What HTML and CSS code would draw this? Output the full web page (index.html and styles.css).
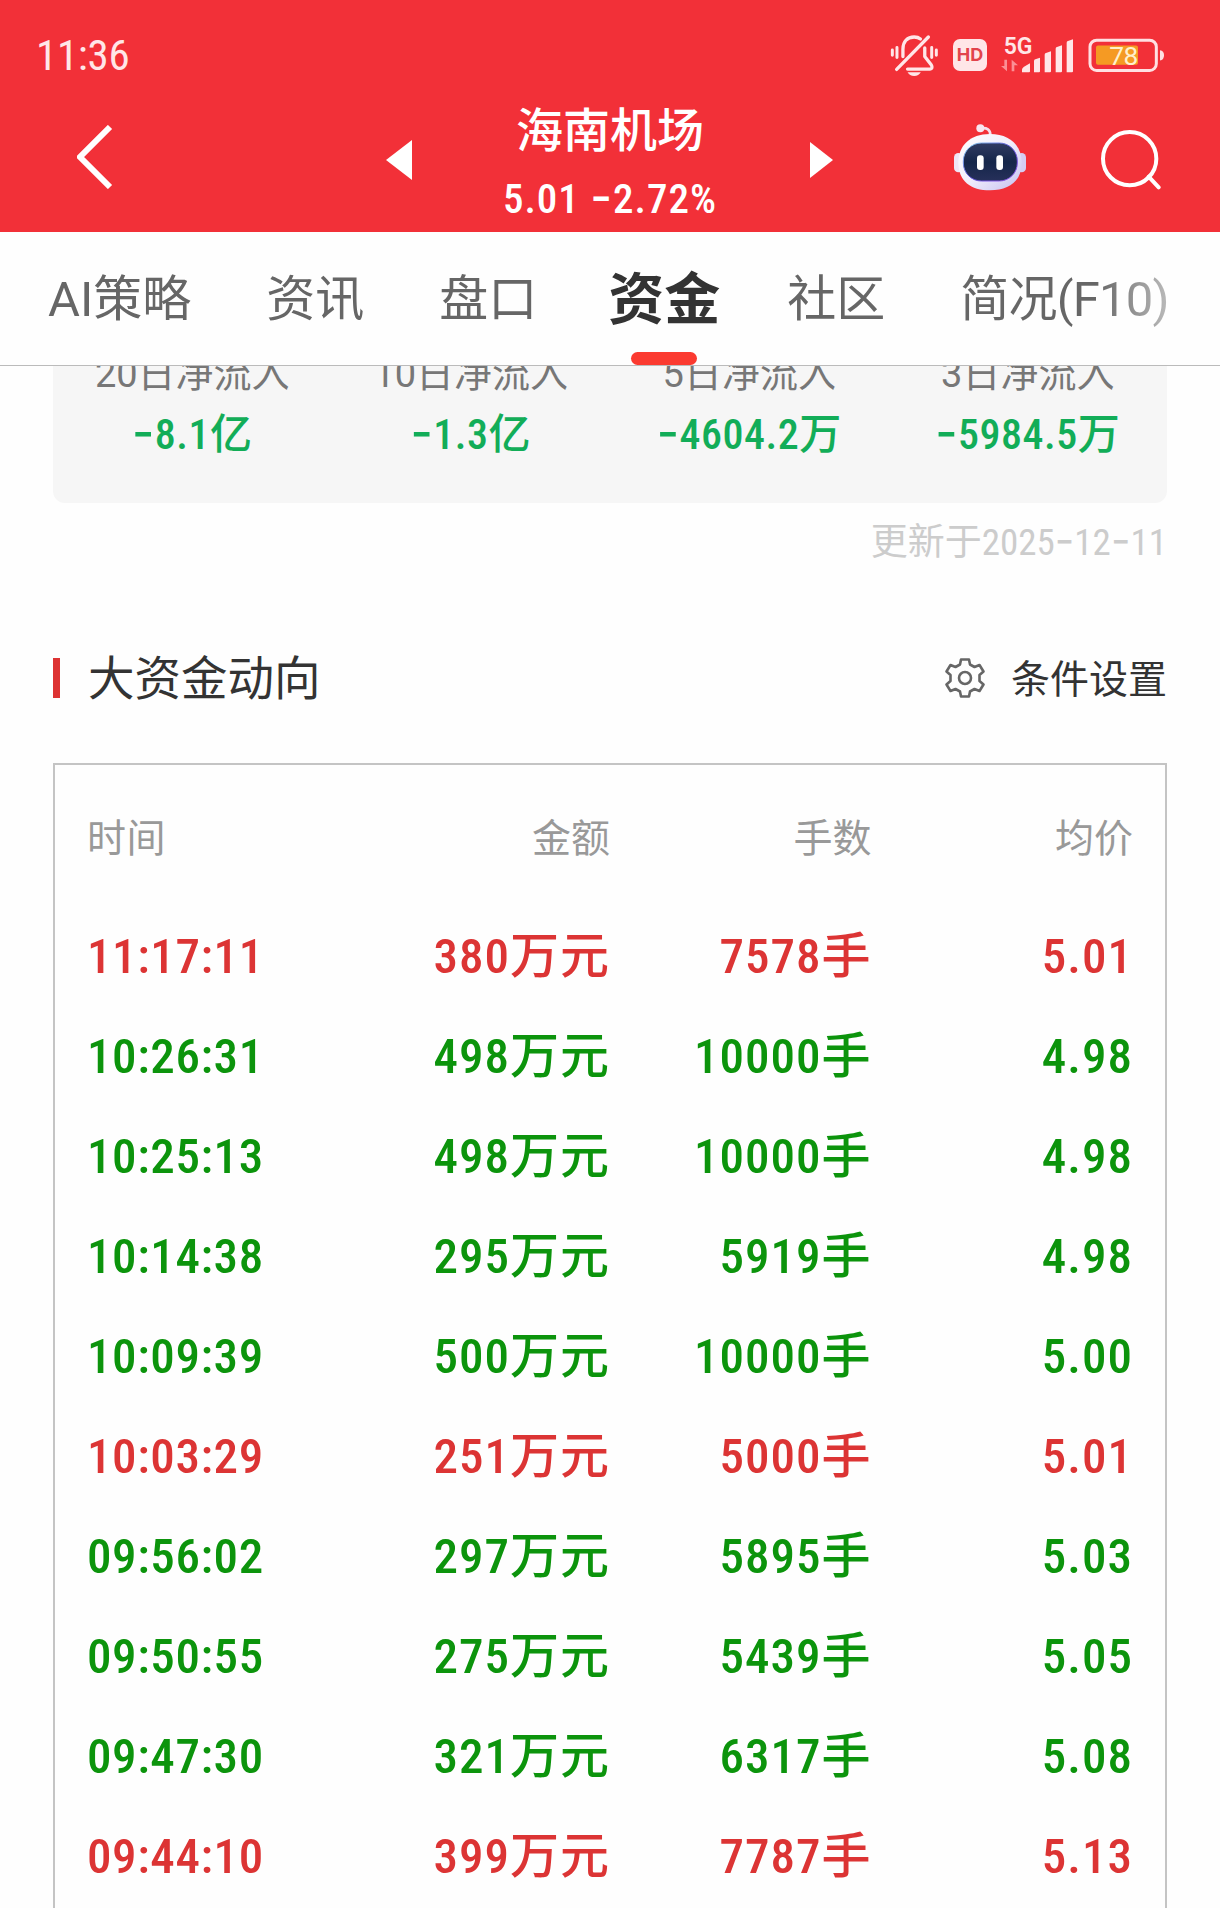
FILE: index.html
```html
<!DOCTYPE html>
<html lang="zh-CN">
<head>
  <meta charset="UTF-8">
  <title>海南机场 - 资金</title>
  <meta name="viewport" content="width=device-width, initial-scale=1">
  <link rel="stylesheet" href="styles.css">
</head>
<body>
  <header class="header">
    <div class="status-bar">
      <span class="clock">11:36</span>
      <div class="status-icons">
        <svg class="icon-bell" viewBox="63 40 148 130" width="49" height="43">
          <g fill="none" stroke="#ffe6e8" stroke-linecap="round" stroke-linejoin="round">
            <path stroke-width="10" d="M179 49 L83 147"/>
            <path stroke-width="10" d="M102 108 V86 C102 62 116 49 136 49 C144 49 150 51 155 55 M168 82 V108 L188 134 C192 140 190 146 184 146 H116"/>
            <path stroke-width="9" d="M70 88 V104 M84 81 V111 M189 81 V111 M203 88 V104"/>
          </g>
          <path fill="#ffe6e8" d="M116 156 H156 Q150 167 136 167 Q122 167 116 156 Z"/>
        </svg>
        <span class="hd">HD</span>
        <svg class="icon-signal" viewBox="390 34 222 138" width="74" height="46">
          <text x="401" y="100" class="net">5G</text>
          <g fill="#fb8f95">
            <path d="M403 117 H411 V152 L393 136 H403 Z"/>
            <path d="M425 152 H433 V134 H444 L425 117 Z"/>
          </g>
          <g fill="#ffe6e8">
            <path d="M456 155 V146 Q457 141 462 138 L480 128 V152 Q480 155 477 155 Z"/>
            <path d="M492 155 V121 Q492 117 496 116 L510 111 V152 Q510 155 507 155 Z"/>
            <path d="M524 155 V102 Q524 98 528 97 L543 92 V152 Q543 155 540 155 Z"/>
            <path d="M557 155 V84 Q557 80 561 79 L576 74 V152 Q576 155 573 155 Z"/>
            <path d="M590 155 V66 Q590 62 594 61 L609 56 V152 Q609 155 606 155 Z"/>
          </g>
        </svg>
        <svg class="icon-battery" viewBox="654 52 231 104" width="77" height="35">
          <rect x="660" y="58" width="199" height="91" rx="20" fill="none" stroke="#ffe0e2" stroke-width="9"/>
          <rect x="678" y="74" width="126" height="58" rx="6" fill="#f59a23"/>
          <path d="M870 88 Q882 90 882 103 Q882 117 870 119 Z" fill="#ffe0e2"/>
          <text x="718" y="132" class="level">78</text>
        </svg>
      </div>
    </div>

    <nav class="nav">
      <svg class="back" viewBox="0 0 36 64" width="36" height="64">
        <path d="M33 2 L3 32 L33 62" fill="none" stroke="#fff" stroke-width="6"/>
      </svg>
      <svg class="prev" viewBox="0 0 26 40" width="26" height="40">
        <path d="M26 0 V40 L0 20 Z" fill="#fff"/>
      </svg>
      <div class="stock">
        <div class="stock-name">海南机场</div>
        <div class="stock-price">5.01 <span class="dash">-</span>2.72%</div>
      </div>
      <svg class="next" viewBox="0 0 23 36" width="23" height="36">
        <path d="M0 0 V36 L23 18 Z" fill="#fff"/>
      </svg>
      <svg class="robot" viewBox="582 71 216 201" width="72" height="67">
        <defs>
          <linearGradient id="shell" x1="0" y1="0" x2="1" y2="1">
            <stop offset="0" stop-color="#ffffff"/>
            <stop offset="0.5" stop-color="#f1eefb"/>
            <stop offset="1" stop-color="#c4bff0"/>
          </linearGradient>
          <linearGradient id="rim" x1="0" y1="0" x2="1" y2="1">
            <stop offset="0" stop-color="#8fdcf5"/>
            <stop offset="0.5" stop-color="#5b4fd8"/>
            <stop offset="1" stop-color="#9a5bea"/>
          </linearGradient>
          <linearGradient id="face" x1="0" y1="0" x2="0" y2="1">
            <stop offset="0" stop-color="#313b62"/>
            <stop offset="0.5" stop-color="#15264a"/>
            <stop offset="1" stop-color="#26305a"/>
          </linearGradient>
        </defs>
        <path d="M662 84 Q691 80 691 104" fill="none" stroke="#f6dfec" stroke-width="8"/>
        <circle cx="661" cy="84" r="12" fill="#f8e6f0"/>
        <rect x="582" y="158" width="26" height="58" rx="13" fill="#efe6f7"/>
        <rect x="772" y="158" width="26" height="58" rx="13" fill="#d5cdf3"/>
        <path d="M690 101 C750 101 785 136 785 187 C785 242 748 270 690 270 C632 270 595 242 595 187 C595 136 630 101 690 101 Z" fill="url(#shell)"/>
        <rect x="610" y="128" width="162" height="114" rx="54" fill="url(#face)" stroke="url(#rim)" stroke-width="3"/>
        <rect x="651" y="165" width="20" height="44" rx="9" fill="#fff"/>
        <rect x="709" y="165" width="20" height="44" rx="9" fill="#fff"/>
      </svg>
      <svg class="search" viewBox="1020 87 183 183" width="61" height="61">
        <g fill="none" stroke="#fff" stroke-width="12">
          <circle cx="1109" cy="176" r="80"/>
          <path d="M1166 230 L1196 262" stroke-linecap="round"/>
        </g>
      </svg>
    </nav>
  </header>

  <div class="tabs">
    <span class="tab">AI策略</span>
    <span class="tab">资讯</span>
    <span class="tab">盘口</span>
    <span class="tab active">资金</span>
    <span class="tab">社区</span>
    <span class="tab tab-fade">简况(F10)</span>
  </div>

  <main class="content">
    <section class="flow-card">
      <div class="flow-item">
        <div class="flow-label">20日净流入</div>
        <div class="flow-value"><span class="dash">-</span>8.1亿</div>
      </div>
      <div class="flow-item">
        <div class="flow-label">10日净流入</div>
        <div class="flow-value"><span class="dash">-</span>1.3亿</div>
      </div>
      <div class="flow-item">
        <div class="flow-label">5日净流入</div>
        <div class="flow-value"><span class="dash">-</span>4604.2万</div>
      </div>
      <div class="flow-item">
        <div class="flow-label">3日净流入</div>
        <div class="flow-value"><span class="dash">-</span>5984.5万</div>
      </div>
    </section>
    <div class="updated">更新于2025<span class="dash">-</span>12<span class="dash">-</span>11</div>

    <div class="section-head">
      <h2>大资金动向</h2>
      <div class="settings">
        <svg viewBox="-20 -20 40 40" width="40" height="40">
          <g fill="none" stroke="#666" stroke-width="2.6" stroke-linejoin="round">
            <path d="M-4 -18.500 H4 L5 -13.500 L9.500 -11 L14.500 -13 L18.500 -6.500 L14.500 -3 V3 L18.500 6.500 L14.500 13 L9.500 11 L5 13.500 L4 18.500 H-4 L-5 13.500 L-9.500 11 L-14.500 13 L-18.500 6.500 L-14.500 3 V-3 L-18.500 -6.500 L-14.500 -13 L-9.500 -11 L-5 -13.500 Z"/>
            <circle r="6"/>
          </g>
        </svg>
        <span>条件设置</span>
      </div>
    </div>

    <section class="trades">
      <div class="row row-head"><span>时间</span><span>金额</span><span>手数</span><span>均价</span></div>
      <div class="row up"><span>11:17:11</span><span>380万元</span><span>7578手</span><span>5.01</span></div>
      <div class="row down"><span>10:26:31</span><span>498万元</span><span>10000手</span><span>4.98</span></div>
      <div class="row down"><span>10:25:13</span><span>498万元</span><span>10000手</span><span>4.98</span></div>
      <div class="row down"><span>10:14:38</span><span>295万元</span><span>5919手</span><span>4.98</span></div>
      <div class="row down"><span>10:09:39</span><span>500万元</span><span>10000手</span><span>5.00</span></div>
      <div class="row up"><span>10:03:29</span><span>251万元</span><span>5000手</span><span>5.01</span></div>
      <div class="row down"><span>09:56:02</span><span>297万元</span><span>5895手</span><span>5.03</span></div>
      <div class="row down"><span>09:50:55</span><span>275万元</span><span>5439手</span><span>5.05</span></div>
      <div class="row down"><span>09:47:30</span><span>321万元</span><span>6317手</span><span>5.08</span></div>
      <div class="row up"><span>09:44:10</span><span>399万元</span><span>7787手</span><span>5.13</span></div>
    </section>
  </main>
</body>
</html>
```
FILE: styles.css
```css
* {
  box-sizing: border-box;
}

body {
  margin: 0;
  height: 1908px;
  overflow: hidden;
  display: flex;
  flex-direction: column;
  font-family: Roboto, "Noto Sans CJK SC", sans-serif;
  font-stretch: 87%;
  background: #fefefe;
  color: #333;
}

svg {
  display: block;
  flex: none;
}

.dash {
  font-family: Inter, sans-serif;
  font-size: 1.15em;
  line-height: 0;
}

/* header */
.header {
  flex: none;
  height: 232px;
  background: #f23038;
  color: #fff;
}

.status-bar {
  display: flex;
  justify-content: space-between;
  height: 84px;
  padding: 26px 55px 0 36px;
}

.clock {
  font-size: 43px;
  line-height: 59px;
  letter-spacing: -0.3px;
  color: #ffe6e8;
}

.status-icons {
  display: flex;
  align-items: center;
  height: 58px;
}

.hd {
  width: 34px;
  height: 32px;
  margin: 0 13px 0 14px;
  border-radius: 7px;
  background: #ffe6e8;
  color: #e2434b;
  font-family: Inter, sans-serif;
  font-size: 18px;
  font-weight: 700;
  line-height: 32px;
  text-align: center;
}

.net {
  font: 600 69px Roboto, sans-serif;
  fill: #ffe6e8;
}

.icon-battery {
  margin-left: 14px;
}

.level {
  font: 400 79px Roboto, sans-serif;
  letter-spacing: -2px;
  fill: #fff0cc;
}

.nav {
  display: flex;
  align-items: center;
  height: 146px;
  padding-left: 77px;
}

.prev {
  margin: 6px 0 0 273px;
}

.next {
  margin-top: 6px;
}

.stock {
  width: 398px;
  margin-top: 13px;
  padding-right: 2px;
  text-align: center;
}

.stock-name {
  font-size: 47px;
  font-weight: 500;
  line-height: 70px;
}

.stock-price {
  font-size: 41px;
  font-weight: 500;
  line-height: 66px;
  letter-spacing: 1px;
}

.robot {
  margin-left: 121px;
}

.search {
  margin: 4px 0 0 74px;
}

/* tabs */
.tabs {
  flex: none;
  display: flex;
  gap: 75px;
  height: 134px;
  padding-left: 48px;
  border-bottom: 1px solid #bbb;
  font-size: 49px;
  font-stretch: 100%;
  line-height: 136px;
  color: #666;
  white-space: nowrap;
}

.tab.active {
  position: relative;
  margin: 0 -8px 0 -4px;
  font-size: 56px;
  font-weight: 700;
  color: #333;
}

.tab.active::after {
  content: "";
  position: absolute;
  left: 23px;
  bottom: 0;
  width: 66px;
  height: 13px;
  border-radius: 7px;
  background: #fb3a30;
}

.tab-fade {
  letter-spacing: -0.8px;
  background: linear-gradient(to right, #666 65%, #bbb 100%);
  background-clip: text;
  -webkit-background-clip: text;
  color: transparent;
}

/* content */
.content {
  flex: 1;
  min-height: 0;
  overflow: hidden;
  padding: 0 53px;
}

.flow-card {
  display: grid;
  grid-template-columns: repeat(4, 1fr);
  height: 137px;
  border-radius: 0 0 12px 12px;
  background: #f6f6f6;
  text-align: center;
}

.flow-label {
  margin-top: -18px;
  font-size: 38px;
  font-stretch: 100%;
  line-height: 52px;
  color: #777;
}

.flow-value {
  margin-top: 10px;
  font-size: 42px;
  font-weight: 500;
  line-height: 50px;
  letter-spacing: 0.5px;
  color: #12ad58;
}

.updated {
  margin-top: 15px;
  font-size: 37px;
  line-height: 50px;
  text-align: right;
  color: #ccc;
}

.section-head {
  display: flex;
  justify-content: space-between;
  align-items: center;
  height: 60px;
  margin-top: 80px;
}

.section-head h2 {
  margin: 0;
  padding-left: 28px;
  border-left: 7px solid #dd3333;
  font-size: 46.5px;
  font-weight: 400;
  line-height: 43px;
  height: 40px;
}

.settings {
  display: flex;
  align-items: center;
  gap: 26px;
  font-size: 39px;
}

.settings span {
  line-height: 60px;
  padding-top: 3px;
}

.trades {
  height: 1300px;
  margin-top: 55px;
  padding: 25px 32px 0;
  border: 2px solid #c4c4c4;
}

.row {
  display: grid;
  grid-template-columns: repeat(4, 1fr);
  height: 100px;
  font-size: 49px;
  font-weight: 500;
  line-height: 101px;
  letter-spacing: 1px;
  text-align: right;
}

.row span:first-child {
  letter-spacing: 0.6px;
  text-align: left;
}

.row-head {
  height: 116px;
  font-size: 39px;
  font-weight: 400;
  line-height: 98px;
  letter-spacing: 0;
  color: #999;
}

.up {
  color: #dc3434;
}

.down {
  color: #0c940c;
}
```
